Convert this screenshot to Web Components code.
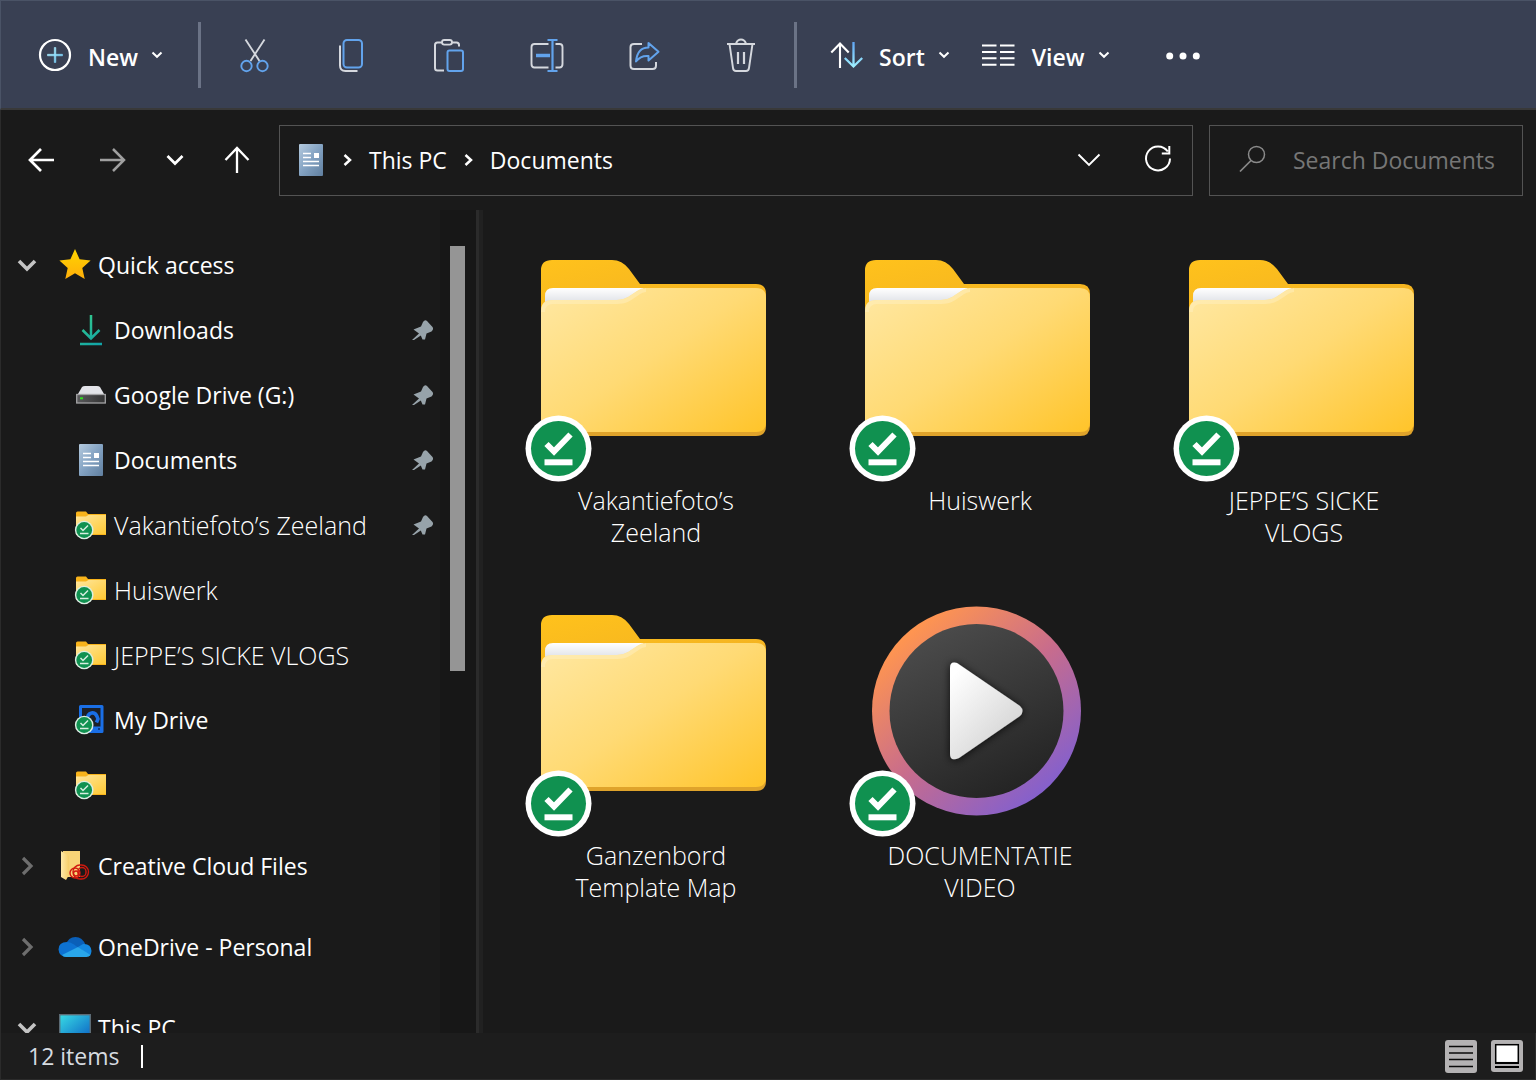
<!DOCTYPE html>
<html lang="en">
<head>
<meta charset="utf-8">
<title>Documents</title>
<style>
html,body{margin:0;height:100%;background:#1a1a1a}
body{font-family:"Open Sans","Noto Sans",sans-serif;font-size:23px;line-height:32px;color:#fff}
</style>
</head>
<body>
<explorer-window>
  <command-bar slot="commands">
    <command-button icon="new" menu>New</command-button>
    <command-divider></command-divider>
    <command-tools>
      <command-button icon="cut" label="Cut"></command-button>
      <command-button icon="copy" label="Copy"></command-button>
      <command-button icon="paste" label="Paste"></command-button>
      <command-button icon="rename" label="Rename"></command-button>
      <command-button icon="share" label="Share"></command-button>
      <command-button icon="trash" label="Delete"></command-button>
    </command-tools>
    <command-divider></command-divider>
    <command-menus>
      <command-button icon="sort" menu>Sort</command-button>
      <command-button icon="view" menu>View</command-button>
    </command-menus>
    <command-button class="more" icon="more" label="See more"></command-button>
  </command-bar>
  <address-row slot="address"></address-row>
  <nav-pane slot="nav">
    <nav-group>
      <nav-item icon="star" state="open">Quick access</nav-item>
      <nav-item icon="download" child pinned>Downloads</nav-item>
      <nav-item icon="disk" child pinned>Google Drive (G:)</nav-item>
      <nav-item icon="doc" child pinned>Documents</nav-item>
      <nav-item icon="minifolder" child pinned light>Vakantiefoto’s Zeeland</nav-item>
      <nav-item icon="minifolder" child light>Huiswerk</nav-item>
      <nav-item icon="minifolder" child light>JEPPE’S SICKE VLOGS</nav-item>
      <nav-item icon="mydrive" child>My Drive</nav-item>
      <nav-item icon="minifolder" child label="Folder"></nav-item>
    </nav-group>
    <nav-group><nav-item icon="cc" state="closed">Creative Cloud Files</nav-item></nav-group>
    <nav-group><nav-item icon="onedrive" state="closed">OneDrive - Personal</nav-item></nav-group>
    <nav-group><nav-item icon="pc" state="open">This PC</nav-item></nav-group>
  </nav-pane>
  <file-grid slot="files">
    <file-tile icon="folder">Vakantiefoto’s<br>Zeeland</file-tile>
    <file-tile icon="folder">Huiswerk</file-tile>
    <file-tile icon="folder">JEPPE’S SICKE<br>VLOGS</file-tile>
    <file-tile icon="folder">Ganzenbord<br>Template Map</file-tile>
    <file-tile icon="video">DOCUMENTATIE<br>VIDEO</file-tile>
  </file-grid>
  <status-bar slot="status">12 items</status-bar>
</explorer-window>

<script>
const G = '#d5d8de', B = '#62a3ec';
const badge = `<circle cx="32.5" cy="198.500" r="33" fill="#fff"/><circle cx="32.500" cy="198.500" r="27.500" fill="#109150"/>
<path d="M20.500 194l7.500 7.500 16.500-17" fill="none" stroke="#fff" stroke-width="6"/><path d="M18.500 212.300h28" stroke="#fff" stroke-width="6"/>`;
// name: [width, height, markup]
const ICONS = {
  new: [32,32,`<defs><linearGradient id="g" x2="1" y2="1"><stop stop-color="#b8f4ff"/><stop offset="1" stop-color="#6cc8f8"/></linearGradient></defs><circle cx="16" cy="16" r="15" stroke="#fff" stroke-width="2.2"/><path d="M8.500 15.300h15v1.500h-15zM15.300 8.500h1.500v15h-1.500z" fill="url(#g)" stroke="url(#g)" stroke-width=".6"/>`],
  chev: [12,8,`<path d="M1.500 1.500L6 5.800l4.500-4.300" stroke="#fff" stroke-width="2"/>`],
  cut: [34,34,`<path d="M7.500 1.500l14 21.500M26.500 1.500l-14 21.500" stroke="${G}" stroke-width="1.900"/><circle cx="8.500" cy="28" r="5.200" stroke="${B}" stroke-width="1.900"/><circle cx="24.500" cy="28" r="5.200" stroke="${B}" stroke-width="1.900"/>`],
  copy: [34,34,`<path d="M5 7.500v20q0 5.500 5.500 5.500h12" stroke="${G}" stroke-width="2"/><rect x="8.500" y="2" width="18.500" height="27.500" rx="3.500" stroke="${B}" stroke-width="2"/>`],
  paste: [34,34,`<path d="M10 4.500H5.500Q3 4.500 3 7v23q0 2.500 2.500 2.500H12M20 4.500h4.500Q27 4.500 27 7v1.500" stroke="${G}" stroke-width="2"/><rect x="10" y="2" width="10" height="4.600" rx="2.300" stroke="${G}" stroke-width="1.800"/><rect x="15.500" y="12.500" width="15.500" height="20.500" rx="2" stroke="${B}" stroke-width="2"/>`],
  rename: [34,34,`<path d="M20 6H6Q3 6 3 9v17q0 3.500 3 3.500h14M27 6h4q3 0 3 3v17q0 3.500-3 3.500h-4" transform="translate(-.5)" stroke="${G}" stroke-width="1.900"/><path d="M7 17.500h14" stroke="${B}" stroke-width="3.500"/><path d="M18.500 2h10M18.500 33h10M23.500 2v31" stroke="${B}" stroke-width="2.200"/>`],
  share: [34,34,`<path d="M16 6H8Q4.500 6 4.500 9v18.500Q4.500 31 8 31h18.500q3.500 0 3.500-3.500V24" stroke="${G}" stroke-width="2"/><path d="M10 23.500C11 13.500 16 9.500 22.500 9.500V5l10 8.800-10 8.700V18C17 17.500 13 19.500 10 23.500z" stroke="${B}" stroke-width="2" stroke-linejoin="round"/>`],
  trash: [34,34,`<path d="M4 6h28M13 5.500q1.500-4 5-4t5 4M6.500 6l3.500 24q.4 3 3 3h10q2.600 0 3-3L29.500 6" stroke="${G}" stroke-width="1.900"/><path d="M15 14v12M21 14v12" stroke="${G}" stroke-width="2.200"/>`],
  sort: [31,28,`<defs><linearGradient id="h" gradientUnits="userSpaceOnUse" x1="0" y1="2" x2="0" y2="26"><stop stop-color="#62a8f4"/><stop offset="1" stop-color="#9ff0ff"/></linearGradient></defs><path d="M9 27V2.500M.3 11.500L9 2.500l8.700 9" stroke="#fff" stroke-width="2.100"/><path d="M22.500 1v24.500M13.800 17l8.700 8.500 8.700-8.500" stroke="url(#h)" stroke-width="2.300"/>`],
  view: [33,22,`<path d="M0 1.500h14.500M18 1.500h14.500M0 8h14.500M18 8h14.500M0 14.300h14.500M18 14.300h14.500M0 20.800h14.500M18 20.800h14.500" stroke="#fff" stroke-width="2"/>`],
  more: [34,8,`<g fill="#fff" stroke="none"><circle cx="3.700" cy="5" r="3.500"/><circle cx="17" cy="5" r="3.500"/><circle cx="30.300" cy="5" r="3.500"/></g>`],
  back: [26,24,`<path d="M26 12H2M13 1L2 12l11 11" stroke="#fff" stroke-width="2.700"/>`],
  forward: [26,24,`<path d="M0 12h24M13 1l11 11-11 11" stroke="#a0a0a0" stroke-width="2.500"/>`],
  recent: [18,12,`<path d="M1.500 2L9 9.500 16.500 2" stroke="#fff" stroke-width="2.700"/>`],
  up: [26,28,`<path d="M13 27V2M1.500 14L13 2l11.500 12" stroke="#fff" stroke-width="2.300"/>`],
  crumb: [9,12,`<path d="M1.500 1l5.500 5-5.500 5" stroke="#fff" stroke-width="2.500"/>`],
  drop: [24,14,`<path d="M1.500 1.500L12 12 22.500 1.500" stroke="#fff" stroke-width="1.900"/>`],
  refresh: [28,30,`<path d="M23.800 6.500A12 12 0 1 0 26 13.500M25.300 1v7.500h-7.500" stroke="#fff" stroke-width="2"/>`],
  search: [28,30,`<circle cx="17.500" cy="9.500" r="8" stroke="#8a8a8a" stroke-width="1.500"/><path d="M12 15.500L1 26.500" stroke="#8a8a8a" stroke-width="1.700"/>`],
  open: [20,14,`<path d="M2 3l8 8 8-8" stroke="#c4c4c4" stroke-width="3.600"/>`],
  closed: [14,20,`<path d="M3 2l8 8-8 8" stroke="#6e6e6e" stroke-width="3.200"/>`],
  pin: [22,22,`<path d="M0 21l7-6.500L1.500 10.500 9 7.500l2-4.500q2-3 4-1l5.500 6q1.500 2-1 4.500L14.500 14.500 13 20.500H10.500L8.800 16.500 2 21z" fill="#97a3aa" stroke="none"/>`],
  star: [32,32,`<defs><linearGradient id="g" x2="0" y2="1"><stop stop-color="#ffd500"/><stop offset="1" stop-color="#ffae0a"/></linearGradient></defs><path d="M16 0l4.600 10.300 11 1.200-8.300 7.500 2.400 11L16 24.300 6.300 30l2.400-11L.4 11.500l11-1.200z" fill="url(#g)" stroke="none"/>`],
  download: [24,32,`<defs><linearGradient id="g" gradientUnits="userSpaceOnUse" x1="2" y1="2" x2="22" y2="30"><stop stop-color="#35c98a"/><stop offset="1" stop-color="#11a4a8"/></linearGradient></defs><path d="M12 1v23M3.500 16l8.500 8.500 8.500-8.500M1 30h22" stroke="url(#g)" stroke-width="2.500"/>`],
  disk: [30,20,`<defs><linearGradient id="g" x2="1"><stop stop-color="#5a5a5c"/><stop offset="1" stop-color="#333"/></linearGradient></defs><path d="M2 9L6 2q1-1 3-1h12q2 0 3 1l4 7z" fill="#e3e4e9" stroke="none"/><rect x=".7" y="9.500" width="28.600" height="8.500" fill="url(#g)" stroke="#a3a3a5" stroke-width="1.300"/><path d="M4 13.300h3" stroke="#31e01f" stroke-width="2"/>`],
  doc: [24,32,`<defs><linearGradient id="g" x2="1" y2="1"><stop stop-color="#b5cbdf"/><stop offset=".5" stop-color="#83a2c2"/><stop offset="1" stop-color="#607f9f"/></linearGradient></defs><rect width="24" height="32" rx="1" fill="url(#g)" stroke="none"/><path d="M4 9.500h8M4 13.500h8M4 17.500h16M4 21.500h16" stroke="#fff" stroke-width="1.300"/><rect x="15" y="9" width="5" height="5" fill="#fff" stroke="none"/>`],
  minifolder: [32,30,`<defs><linearGradient id="g" x2="1" y2="1"><stop stop-color="#ffe79f"/><stop offset="1" stop-color="#ffc933"/></linearGradient></defs><path d="M1 25V3q0-1.500 1.500-1.500H11L13 4h18v21z" fill="#f9b41b" stroke="none"/><path d="M1 24V6.500h10L13.500 5H31v19z" fill="url(#g)" stroke="none"/><circle cx="9.200" cy="20" r="9.300" fill="#dceee3" stroke="none"/><circle cx="9.200" cy="20" r="7.900" fill="#109150" stroke="none"/><path d="M5.500 18l2.500 2.500 5-5M5 23.500h8.500" stroke="#d7eee0" stroke-width="1.500"/>`],
  mydrive: [32,32,`<path d="M5.500 2.500h21.500v25H5.500z" fill="#1c2028" stroke="#1a6fe6" stroke-width="3" stroke-linejoin="round"/><path d="M5 22.500h22v5H5z" fill="#1a6fe6" stroke="none"/><path d="M12 17q0-7 4.500-8t6.500 6l-1.500 3.500" stroke="#1a6fe6" stroke-width="3.500"/><path d="M23 25h2" stroke="#0b2b66" stroke-width="1.500"/><circle cx="9.200" cy="21" r="9.300" fill="#dceee3" stroke="none"/><circle cx="9.200" cy="21" r="7.900" fill="#109150" stroke="none"/><path d="M5.500 19l2.500 2.500 5-5M5 24.500h8.500" stroke="#d7eee0" stroke-width="1.500"/>`],
  cc: [30,32,`<defs><linearGradient id="g" x2="1"><stop stop-color="#ffeaa9"/><stop offset="1" stop-color="#f7cf69"/></linearGradient></defs><path d="M3 1h17v26H3z" fill="#f8d477" stroke="none"/><path d="M1 1L9 6v19l-3 5-5-3z" fill="url(#g)" stroke="none"/><g stroke="#d0190f" stroke-width="1.400"><rect x="13" y="15" width="15.500" height="14" rx="7"/><rect x="18" y="17.500" width="8" height="9" rx="4"/><circle cx="15" cy="23" r="5"/><circle cx="16" cy="23.500" r="2.500"/></g>`],
  onedrive: [34,22,`<path d="M8 9Q10 1 17.500 1q7 0 10 8l-8 6z" fill="#0a5fb8" stroke="none"/><path d="M12 21Q1 22 .5 13.500.5 6 9 6q4 0 7 2.500L22 13z" fill="#0d72d2" stroke="none"/><path d="M20 11l5-3q8-.5 8.500 7 0 3-2 5z" fill="#1487df" stroke="none"/><path d="M4 19l16-8 12.500 8q-1.500 2-4 2H8q-2.500 0-4-2z" fill="#29a6ea" stroke="none"/>`],
  pc: [32,30,`<defs><linearGradient id="g" x2="1" y2="1"><stop stop-color="#38dce4"/><stop offset="1" stop-color="#0b62c4"/></linearGradient></defs><rect x=".7" y="1.700" width="30.600" height="24" fill="url(#g)" stroke="#5c6b75" stroke-width="1.400"/><path d="M10 28.500h12" stroke="#9aa4aa" stroke-width="2"/>`],
  list: [32,33,`<rect width="32" height="33" rx="3" fill="#b4b2b3" stroke="none"/><path d="M4 6.500h24M4 13h24M4 19.500h24M4 26.500h24" stroke="#0a0a0a" stroke-width="1.400"/>`],
  thumbs: [32,32,`<rect width="32" height="32" rx="3" fill="#b4b2b3" stroke="none"/><rect x="4.700" y="4.700" width="22.600" height="18" fill="#fff" stroke="#000" stroke-width="1.500"/><path d="M4 23h24M4 27h24" stroke="#000" stroke-width="1.800"/>`],
  folder: [260,234,`<defs><linearGradient id="t" x2=".6" y2="1"><stop stop-color="#ffc21c"/><stop offset="1" stop-color="#efad23"/></linearGradient><linearGradient id="f" x2="1" y2=".95"><stop stop-color="#ffe8a3"/><stop offset=".5" stop-color="#ffda74"/><stop offset="1" stop-color="#ffc52d"/></linearGradient><linearGradient id="p" x2="0" y2="1"><stop stop-color="#fff"/><stop offset="1" stop-color="#cfd3db"/></linearGradient></defs><g stroke="none"><path d="M15 60V20Q15 10 26 10H86q10 0 17 9l11 15H230q10 0 10 10V90L15 100z" fill="url(#t)"/><path d="M19 60V46q0-8 8-8H118L92 58z" fill="url(#p)"/><path d="M15 80v96q0 10 10 10H230q10 0 10-10V80z" fill="#dfa32b"/><path d="M15 61q0-11 11-11H91q6 0 11-3l9-6q4-3 9-3H230q10 0 10 10V172q0 10-10 10H25q-10 0-10-10z" fill="url(#f)"/><path d="M17 62q0-10 10-10H91q7 0 12-3l9-6q4-3 8-3" fill="none" stroke="#fff0c0" stroke-opacity=".5" stroke-width="4"/>${badge}</g>`],
  video: [260,234,`<defs><linearGradient id="r" x1=".15" y1=".15" x2=".8" y2=".9"><stop stop-color="#ff9550"/><stop offset=".5" stop-color="#c86c8c"/><stop offset="1" stop-color="#8560cc"/></linearGradient><linearGradient id="d" x1=".2" x2=".7" y2="1"><stop stop-color="#4d4d4d"/><stop offset="1" stop-color="#232323"/></linearGradient><linearGradient id="w" x2=".8" y2="1"><stop offset=".1" stop-color="#fff"/><stop offset="1" stop-color="#cfcfcf"/></linearGradient><filter id="s" x="-30%" y="-30%" width="160%" height="160%"><feDropShadow dx="0" dy="1" stdDeviation="4" flood-color="#000" flood-opacity=".8"/></filter></defs><g stroke="none"><circle cx="126.500" cy="106" r="104.500" fill="url(#r)"/><circle cx="126.500" cy="106" r="87" fill="url(#d)"/><path d="M100 63q0-7 7-5l63 43q5 5 0 10l-61 42q-9 4-9-4z" fill="url(#w)" filter="url(#s)"/>${badge}</g>`]
};

class Base extends HTMLElement {
  connectedCallback() {
    if (this.shadowRoot) return;
    this.attachShadow({ mode: 'open' }).innerHTML =
      `<style>:host,*{box-sizing:border-box}button{all:unset;box-sizing:border-box;cursor:default}a{color:inherit;text-decoration:none}${this.css()}</style>${this.html()}`;
  }
  css() { return ''; }
  html() { return '<slot></slot>'; }
}
const define = (name, css, html) => customElements.define(name, class extends Base {
  css() { return css; }
  html() { return html ? html(this) : '<slot></slot>'; }
});
const label = el => el.getAttribute('label') ? `aria-label="${el.getAttribute('label')}"` : '';

define('fx-icon', `:host{display:block;flex:none}svg{display:block;overflow:visible}`, el => {
  const [w, h, body] = ICONS[el.getAttribute('name')];
  return `<svg width="${w}" height="${h}" viewBox="0 0 ${w} ${h}" fill="none" aria-hidden="true">${body}</svg>`;
});

define('explorer-window', `
:host{display:flex;flex-direction:column;height:100vh;min-height:600px;overflow:hidden;background:#1a1a1a}
main{flex:1;min-height:0;display:flex}
.split{flex:none;width:7px;background:#212121;border-left:3px solid #2b2b2b}
slot[name=files]::slotted(*){flex:1}`,
  () => `<slot name="commands"></slot><slot name="address"></slot>
<main><slot name="nav"></slot><div class="split"></div><slot name="files"></slot></main><slot name="status"></slot>`);

define('command-bar', `
:host{display:flex;align-items:center;flex:none;height:110px;padding-left:38px;background:#394053;border-top:1px solid #4a5366;border-left:1px solid #4a5366;border-bottom:2px solid #393939}
::slotted(.more){margin-left:56px}`);
define('command-divider', `:host{display:block;width:3px;height:66px;background:#6b7386;margin:0 34px 0 35px}`);
define('command-tools', `:host{display:flex;gap:63px;margin:0 2px 0 3px}`);
define('command-menus', `:host{display:flex;gap:32px}`);
define('command-button', `
button{display:flex;align-items:center;font-weight:600}
.text{margin:4px 13px 0 17px}`,
  el => `<button type="button" ${label(el)}><fx-icon name="${el.getAttribute('icon')}"></fx-icon>${
    el.hasAttribute('menu') ? '<span class="text"><slot></slot></span><fx-icon name="chev"></fx-icon>' : ''}</button>`);

define('address-row', `
:host{display:flex;align-items:center;flex:none;height:100px;padding:0 13px 0 27px;border-left:1px solid #2b2b2b}
.nav{display:flex;align-items:center;gap:40px;width:251px}
.nav button:first-child{margin-right:6px}
nav,.search{height:71px;display:flex;align-items:center;border:1px solid #535353}
nav{flex:1;padding:0 20px 0 19px;margin-right:16px}
nav a{margin:0 17px}
nav button{margin-left:43px}
.fill{flex:1}
fx-icon[name=doc]{margin-right:20px}
.search{width:314px;padding-left:29px;gap:26px}
input{all:unset;flex:1;min-width:0}
input::placeholder{color:#767676;opacity:1}`,
  () => `<div class="nav"><button aria-label="Back"><fx-icon name="back"></fx-icon></button><button aria-label="Forward"><fx-icon name="forward"></fx-icon></button><button aria-label="Recent locations"><fx-icon name="recent"></fx-icon></button><button aria-label="Up"><fx-icon name="up"></fx-icon></button></div>
<nav aria-label="Address"><fx-icon name="doc"></fx-icon><fx-icon name="crumb"></fx-icon><a href="#pc">This PC</a><fx-icon name="crumb"></fx-icon><a href="#documents">Documents</a><span class="fill"></span><button aria-label="Previous locations"><fx-icon name="drop"></fx-icon></button><button aria-label="Refresh"><fx-icon name="refresh"></fx-icon></button></nav>
<label class="search"><fx-icon name="search"></fx-icon><input type="search" placeholder="Search Documents" aria-label="Search Documents"></label>`);

define('nav-pane', `
:host{display:flex;flex:none;width:476px;border-left:1px solid #2b2b2b;overflow:hidden}
.tree{flex:1;min-width:0;display:flex;flex-direction:column;gap:16px;padding-top:22px}
.track{width:36px;background:#171717;padding:36px 11px 0 10px}
.thumb{height:425px;background:#959595}`,
  () => `<div class="tree"><slot></slot></div><div class="track"><div class="thumb"></div></div>`);
define('nav-group', `:host{display:block;flex:none}`);
define('nav-item', `
:host{display:flex;align-items:center;height:65px;padding:0 6px 0 16px}
:host([child]){padding-left:73px}
:host([light]){font-size:25px;font-weight:300}
button{display:grid;place-items:center;width:20px;margin-right:21px}
a{flex:1;min-width:0;display:flex;align-items:center;gap:6px;white-space:nowrap}
.icon{width:34px;display:grid;place-items:center}`,
  el => `${el.getAttribute('state') ? `<button aria-label="Toggle"><fx-icon name="${el.getAttribute('state')}"></fx-icon></button>` : ''}<a href="#item" ${label(el)}><span class="icon"><fx-icon name="${el.getAttribute('icon')}"></fx-icon></span><span><slot></slot></span></a>${el.hasAttribute('pinned') ? '<fx-icon name="pin"></fx-icon>' : ''}`);

define('file-grid', `
:host{display:grid;grid-template-columns:repeat(auto-fill,324px);align-content:start;row-gap:57px;padding:40px 0 0 11px;min-width:0;overflow:hidden}`);
define('file-tile', `
:host{display:block;font-size:25px;font-weight:300}
a{display:flex;flex-direction:column;align-items:center;text-align:center}
span{min-height:64px}`,
  el => `<a href="#file"><fx-icon name="${el.getAttribute('icon')}"></fx-icon><span><slot></slot></span></a>`);

define('status-bar', `
:host{display:flex;align-items:center;flex:none;height:47px;padding:0 12px 0 27px;background:#1d1d1d;border:1px solid #2b2b2b;border-top:0;color:#d6dbe0}
.mark{width:2px;height:23px;background:#fff;margin-left:22px}
.views{margin-left:auto;display:flex;gap:14px}`,
  () => `<slot></slot><span class="mark"></span><div class="views"><button aria-label="Details"><fx-icon name="list"></fx-icon></button><button aria-label="Large icons"><fx-icon name="thumbs"></fx-icon></button></div>`);
</script>
</body>
</html>
